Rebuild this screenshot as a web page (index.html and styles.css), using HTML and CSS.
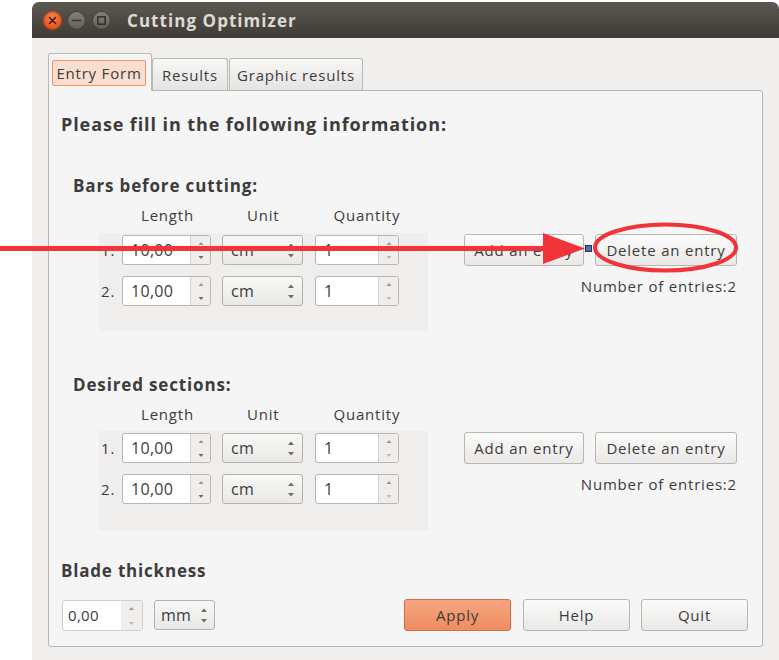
FILE: index.html
```html
<!DOCTYPE html>
<html>
<head>
<meta charset="utf-8">
<link rel="stylesheet" href="styles.css">
</head>
<body>
<div class="window">
  <div class="titlebar">
    <span class="wbtn close"><svg width="19" height="19" viewBox="0 0 19 19"><path d="M6.5 6.5l6 6M12.5 6.5l-6 6" stroke="#4a1a0a" stroke-width="1.6" stroke-linecap="round"/></svg></span>
    <span class="wbtn mini"><svg width="19" height="19" viewBox="0 0 19 19"><path d="M5.5 9.5h8" stroke="#35332f" stroke-width="1.6" stroke-linecap="round"/></svg></span>
    <span class="wbtn maxi"><svg width="19" height="19" viewBox="0 0 19 19"><rect x="5.8" y="5.8" width="7.4" height="7.4" fill="none" stroke="#35332f" stroke-width="1.6"/></svg></span>
    <span class="title">Cutting Optimizer</span>
  </div>
  <div class="main">
    <div class="tabs">
      <div class="tab active"><span class="focus">Entry Form</span></div>
      <div class="tab t-results">Results</div>
      <div class="tab t-graphic">Graphic results</div>
    </div>
    <div class="pane">
      <h1 class="heading">Please fill in the following information:</h1>

      <section class="group">
        <h2 class="subhead">Bars before cutting:</h2>
        <div class="cols">
          <span class="col-len">Length</span><span class="col-unit">Unit</span><span class="col-qty">Quantity</span>
        </div>
        <div class="group-row">
          <div class="table">
            <div class="row">
              <span class="num">1.</span>
              <div class="spin len"><span class="val">10,00</span><span class="arrows"><svg width="20" height="30" viewBox="0 0 20 30"><path d="M7.5 10l2.5-3 2.5 3z" fill="#9a9894"/><path d="M7.5 21l2.5 3 2.5-3z" fill="#6e6c68"/></svg></span></div>
              <div class="combo"><span>cm</span><svg width="12" height="30" viewBox="0 0 12 30"><path d="M3 12l3-3.5 3 3.5z" fill="#6e6c68"/><path d="M3 19l3 3.5 3-3.5z" fill="#6e6c68"/></svg></div>
              <div class="spin qty"><span class="val">1</span><span class="arrows"><svg width="20" height="30" viewBox="0 0 20 30"><path d="M7.5 10l2.5-3 2.5 3z" fill="#9a9894"/><path d="M7.5 21l2.5 3 2.5-3z" fill="#bdbbb7"/></svg></span></div>
            </div>
            <div class="row">
              <span class="num">2.</span>
              <div class="spin len"><span class="val">10,00</span><span class="arrows"><svg width="20" height="30" viewBox="0 0 20 30"><path d="M7.5 10l2.5-3 2.5 3z" fill="#9a9894"/><path d="M7.5 21l2.5 3 2.5-3z" fill="#6e6c68"/></svg></span></div>
              <div class="combo"><span>cm</span><svg width="12" height="30" viewBox="0 0 12 30"><path d="M3 12l3-3.5 3 3.5z" fill="#6e6c68"/><path d="M3 19l3 3.5 3-3.5z" fill="#6e6c68"/></svg></div>
              <div class="spin qty"><span class="val">1</span><span class="arrows"><svg width="20" height="30" viewBox="0 0 20 30"><path d="M7.5 10l2.5-3 2.5 3z" fill="#9a9894"/><path d="M7.5 21l2.5 3 2.5-3z" fill="#bdbbb7"/></svg></span></div>
            </div>
          </div>
          <div class="actions">
            <div class="btns">
              <button class="btn add">Add an entry</button>
              <button class="btn del">Delete an entry</button>
            </div>
            <div class="count">Number of entries:2</div>
          </div>
        </div>
      </section>

      <section class="group second">
        <h2 class="subhead">Desired sections:</h2>
        <div class="cols">
          <span class="col-len">Length</span><span class="col-unit">Unit</span><span class="col-qty">Quantity</span>
        </div>
        <div class="group-row">
          <div class="table tall">
            <div class="row">
              <span class="num">1.</span>
              <div class="spin len"><span class="val">10,00</span><span class="arrows"><svg width="20" height="30" viewBox="0 0 20 30"><path d="M7.5 10l2.5-3 2.5 3z" fill="#9a9894"/><path d="M7.5 21l2.5 3 2.5-3z" fill="#6e6c68"/></svg></span></div>
              <div class="combo"><span>cm</span><svg width="12" height="30" viewBox="0 0 12 30"><path d="M3 12l3-3.5 3 3.5z" fill="#6e6c68"/><path d="M3 19l3 3.5 3-3.5z" fill="#6e6c68"/></svg></div>
              <div class="spin qty"><span class="val">1</span><span class="arrows"><svg width="20" height="30" viewBox="0 0 20 30"><path d="M7.5 10l2.5-3 2.5 3z" fill="#9a9894"/><path d="M7.5 21l2.5 3 2.5-3z" fill="#bdbbb7"/></svg></span></div>
            </div>
            <div class="row">
              <span class="num">2.</span>
              <div class="spin len"><span class="val">10,00</span><span class="arrows"><svg width="20" height="30" viewBox="0 0 20 30"><path d="M7.5 10l2.5-3 2.5 3z" fill="#9a9894"/><path d="M7.5 21l2.5 3 2.5-3z" fill="#6e6c68"/></svg></span></div>
              <div class="combo"><span>cm</span><svg width="12" height="30" viewBox="0 0 12 30"><path d="M3 12l3-3.5 3 3.5z" fill="#6e6c68"/><path d="M3 19l3 3.5 3-3.5z" fill="#6e6c68"/></svg></div>
              <div class="spin qty"><span class="val">1</span><span class="arrows"><svg width="20" height="30" viewBox="0 0 20 30"><path d="M7.5 10l2.5-3 2.5 3z" fill="#9a9894"/><path d="M7.5 21l2.5 3 2.5-3z" fill="#bdbbb7"/></svg></span></div>
            </div>
          </div>
          <div class="actions">
            <div class="btns">
              <button class="btn add">Add an entry</button>
              <button class="btn del">Delete an entry</button>
            </div>
            <div class="count">Number of entries:2</div>
          </div>
        </div>
      </section>

      <h2 class="blade">Blade thickness</h2>
      <div class="bottom">
        <div class="spin blade-spin"><span class="val">0,00</span><span class="arrows"><svg width="21" height="31" viewBox="0 0 21 31"><path d="M8 10l2.5-3 2.5 3z" fill="#9a9894"/><path d="M8 22l2.5 3 2.5-3z" fill="#bdbbb7"/></svg></span></div>
        <div class="combo unit-mm"><span>mm</span><svg width="12" height="30" viewBox="0 0 12 30"><path d="M3 12l3-3.5 3 3.5z" fill="#6e6c68"/><path d="M3 19l3 3.5 3-3.5z" fill="#6e6c68"/></svg></div>
        <button class="btn apply">Apply</button>
        <button class="btn plain">Help</button>
        <button class="btn plain">Quit</button>
      </div>
    </div>
  </div>
</div>
<svg class="annot" width="779" height="660" viewBox="0 0 779 660">
  <line x1="0" y1="248.5" x2="546" y2="248.5" stroke="#f1333a" stroke-width="5"/>
  <polygon points="543,233 585,248.5 543,264" fill="#f1333a"/>
  <rect x="585.5" y="245.5" width="6" height="6" fill="#4f6fae" stroke="#24365e" stroke-width="1"/>
  <ellipse cx="665.5" cy="247.5" rx="70.5" ry="23" fill="none" stroke="#f1333a" stroke-width="4"/>
</svg>
</body>
</html>
```

FILE: styles.css
```css
* { box-sizing: border-box; }
html, body { margin: 0; }
body {
  width: 779px;
  height: 660px;
  overflow: hidden;
  position: relative;
  background: #ffffff;
  font-family: "Open Sans", "DejaVu Sans", sans-serif;
  color: #3c3c3c;
  letter-spacing: 0.8px;
}
.window {
  margin: 2px 0 0 32px;
  width: 747px;
  height: 658px;
  background: #f0efed;
  border-radius: 7px 7px 0 0;
  overflow: hidden;
}
.titlebar {
  height: 36px;
  background: linear-gradient(#5c5851, #3d3b36);
  display: flex;
  align-items: center;
  padding-left: 11px;
}
.wbtn {
  width: 19px;
  height: 19px;
  border-radius: 50%;
  display: block;
}
.wbtn svg { display: block; }
.close {
  background: radial-gradient(circle at 50% 35%, #f6844f, #e2531d 70%);
  box-shadow: inset 0 0 0 1px #a8401a;
}
.mini {
  margin-left: 5px;
  background: linear-gradient(#85817a, #605d57);
  box-shadow: inset 0 0 0 1px #3a3834;
}
.maxi {
  margin-left: 6px;
  background: linear-gradient(#85817a, #605d57);
  box-shadow: inset 0 0 0 1px #3a3834;
}
.title {
  margin-left: 16px;
  font-weight: bold;
  font-size: 17px;
  color: #dedad1;
  letter-spacing: 1.05px;
}
.main {
  padding: 15px 0 0 16px;
}
.tabs {
  display: flex;
  align-items: flex-end;
  height: 37px;
  position: relative;
  z-index: 1;
}
.tab {
  height: 32px;
  border: 1px solid #bcb9b4;
  border-bottom: none;
  border-radius: 3px 3px 0 0;
  background: linear-gradient(#f7f7f6, #e5e4e2);
  font-size: 15px;
  display: flex;
  align-items: center;
  justify-content: center;
}
.tab.active {
  width: 104px;
  height: 38px;
  margin-bottom: -1px;
  background: #f5f5f5;
  align-items: flex-start;
  justify-content: flex-start;
  padding: 6px 0 0 3px;
}
.focus {
  width: 94px;
  height: 26px;
  border: 1.5px solid #f0936a;
  border-radius: 2px;
  background: #f9ddcf;
  display: flex;
  align-items: center;
  justify-content: center;
}
.t-results { width: 76px; }
.t-graphic { width: 134px; margin-left: 1px; }
.pane {
  width: 715px;
  height: 557px;
  border: 1px solid #b9b6b1;
  border-radius: 0 3px 3px 3px;
  background: #f5f5f5;
  padding: 22px 0 0 12px;
}
.heading {
  margin: 0;
  font-size: 18px;
  line-height: 22px;
  font-weight: bold;
  letter-spacing: 0.9px;
}
.subhead {
  margin: 0 0 0 12px;
  font-size: 17px;
  line-height: 20px;
  font-weight: bold;
  letter-spacing: 0.85px;
}
.group { margin-top: 41px; }
.group.second { margin-top: 44px; }
.cols {
  margin: 9px 0 0 0;
  height: 20px;
  line-height: 20px;
  font-size: 15px;
  position: relative;
  display: flex;
}
.col-len { margin-left: 80px; width: 56px; }
.col-unit { margin-left: 50px; }
.col-qty { margin-left: 54px; }
.group-row {
  display: flex;
  align-items: flex-start;
  margin-top: 8px;
}
.second .group-row { margin-top: 7px; }
.table {
  margin-left: 38px;
  width: 329px;
  height: 98px;
  background: #efeeec;
  padding-top: 2px;
  display: flex;
  flex-direction: column;
  gap: 11px;
}
.table.tall { height: 99px; }
.row {
  display: flex;
  align-items: center;
  height: 30px;
}
.num {
  width: 23px;
  padding-left: 2px;
  font-size: 15px;
}
.spin {
  height: 30px;
  border: 1px solid #b9b6b1;
  border-radius: 3px;
  background: #ffffff;
  display: flex;
  overflow: hidden;
}
.spin .val {
  flex: 1;
  font-size: 16px;
  line-height: 28px;
  padding-left: 8px;
  letter-spacing: 0.3px;
}
.spin .arrows {
  width: 20px;
  background: #efeeec;
  border-left: 1px solid #d4d2ce;
  display: block;
}
.spin .arrows svg { display: block; margin-top: -1px; }
.spin.len { width: 89px; }
.spin.qty { width: 84px; margin-left: 12px; }
.combo {
  width: 81px;
  height: 30px;
  margin-left: 11px;
  border: 1px solid #b5b2ad;
  border-radius: 3px;
  background: linear-gradient(#f8f8f7, #e9e8e6);
  display: flex;
  align-items: center;
  justify-content: space-between;
  padding: 0 5px 0 8px;
  font-size: 16px;
  letter-spacing: 0.3px;
}
.combo svg { display: block; }
.actions {
  margin-left: 36px;
  width: 273px;
  padding-top: 1px;
  display: flex;
  flex-direction: column;
  align-items: flex-end;
}
.btns {
  display: flex;
  gap: 11px;
}
.btn {
  height: 32px;
  border: 1px solid #b9b6b1;
  border-radius: 3px;
  background: linear-gradient(#fbfbfb, #e9e8e6);
  font-family: inherit;
  font-size: 15px;
  letter-spacing: 0.8px;
  color: #3c3c3c;
  padding: 0;
}
.btn.add { width: 120px; }
.btn.del { width: 142px; }
.count {
  margin-top: 10px;
  font-size: 15px;
  line-height: 20px;
}
.blade {
  margin: 31px 0 0 0;
  font-size: 17px;
  line-height: 20px;
  font-weight: bold;
  letter-spacing: 0.8px;
}
.bottom {
  margin-top: 18px;
  display: flex;
  align-items: center;
  height: 32px;
}
.spin.blade-spin {
  width: 81px;
  height: 31px;
  margin-left: 1px;
  border-color: #d0cecb;
}
.spin.blade-spin .arrows { width: 21px; border-left: none; }
.spin.blade-spin .val { font-size: 15px; padding-left: 5px; }
.combo.unit-mm {
  width: 61px;
  margin-left: 11px;
  padding: 0 4px 0 6px;
}
.btn.apply {
  width: 107px;
  margin-left: 189px;
  background: linear-gradient(#f6a681, #ef8c60);
  border-color: #c7714d;
}
.btn.plain {
  width: 107px;
  margin-left: 12px;
}
.bottom .btn.plain:last-child { margin-left: 11px; }
.annot {
  position: absolute;
  left: 0;
  top: 0;
  pointer-events: none;
}
```
